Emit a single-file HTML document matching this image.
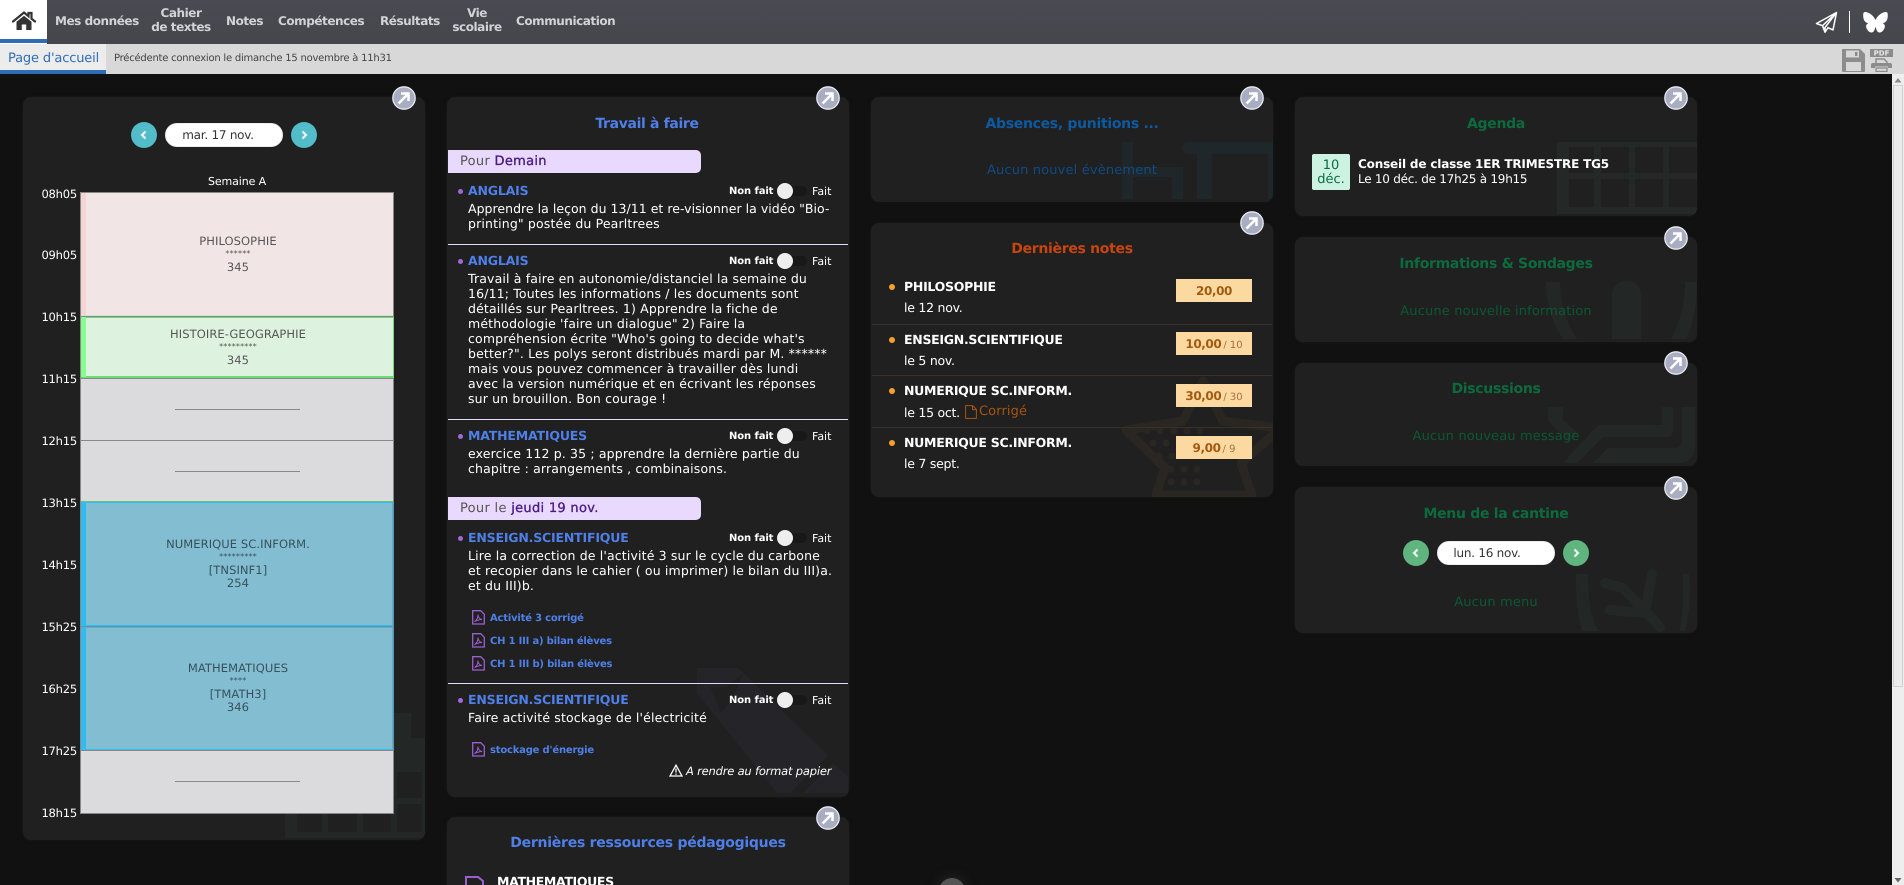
<!DOCTYPE html>
<html lang="fr"><head><meta charset="utf-8"><title>Page d'accueil</title>
<style>
html,body{margin:0;padding:0;width:1904px;height:885px;overflow:hidden;background:#111}
body{position:relative;font-family:"DejaVu Sans","Liberation Sans",sans-serif;font-size:12px;color:#fff;text-rendering:geometricPrecision}
.a{position:absolute}
.t{position:absolute;white-space:nowrap;line-height:16px;height:16px}
.c{text-align:center}
.b{font-weight:bold}
.nav{color:#d2d3d6;font-size:12px;font-weight:bold;letter-spacing:-.45px}
.panel{position:absolute;background:#202020;border-radius:8px;box-shadow:0 0 3px #1a1a1a;overflow:hidden}
.h{font-size:11.5px;color:#fff;text-align:right;left:30px;width:47px;letter-spacing:-.2px;margin-top:.5px}
.cl{color:#555;font-size:11.5px;left:86px;width:304px;text-align:center;letter-spacing:.08px}
.cd{color:#37505c}
.st{font-size:8px;letter-spacing:.2px;margin-top:1px}
.ln{position:absolute;left:175px;width:125px;height:1px;background:#888}
.ti{font-size:12.5px;font-weight:bold;color:#4f7fe8;left:468px;letter-spacing:-.18px}
.tx{font-size:12.5px;color:#fff;left:468px;letter-spacing:.15px}
.bul{position:absolute;width:5px;height:5px;border-radius:50%;background:#a368d8;left:458px}
.nf{font-size:10px;font-weight:bold;color:#fff;left:729px;letter-spacing:-.1px;margin-top:1px}
.f{font-size:11px;color:#fff;left:812px;letter-spacing:0;margin-top:1px}
.trk{position:absolute;left:785px;width:22px;height:10px;background:#181818;border-radius:5px}
.knb{position:absolute;left:777px;width:16px;height:16px;background:#eee;border-radius:50%}
.bar{position:absolute;left:448px;width:253px;height:23px;background:#e9d9fe;border-radius:0 5px 5px 0}
.bt{left:460px;font-size:13px;color:#555;letter-spacing:.3px}
.bt b{color:#4a1c85;font-weight:normal;-webkit-text-stroke:.35px #4a1c85}
.sep{position:absolute;left:448px;width:400px;height:1px;background:#e9d9fe}
.lk{font-size:10px;font-weight:bold;color:#4f7fe8;left:490px;letter-spacing:-.2px;margin-top:1px}
.pt{font-size:14px;font-weight:bold;text-align:center;width:402px;letter-spacing:-.3px;margin-top:1px}
.pe{font-size:13px;text-align:center;width:402px;letter-spacing:.15px;margin-top:1px}
.gr{color:#0c6b3e}.g2{color:#0a5934}
.nt{font-size:12.5px;font-weight:bold;color:#fff;left:904px;letter-spacing:-.28px}
.ns{font-size:12.5px;color:#fff;left:904px;letter-spacing:-.25px;margin-top:1px}
.nb{position:absolute;left:1176px;width:76px;height:23px;background:#fdd9a2;color:#a05a10;text-align:center;line-height:24px;font-weight:bold;font-size:12px;letter-spacing:-.4px;white-space:nowrap}
.nb small{font-weight:normal;font-size:10px;color:#a8703a;letter-spacing:0;margin-left:2px}
.dot{position:absolute;width:6px;height:6px;border-radius:50%;background:#f9a226;left:889px}
.nsep{position:absolute;left:872px;width:400px;height:1px;background:#3a3026}
.circ{position:absolute;width:24px;height:24px}
.pill{position:absolute;width:118px;height:24px;background:#fff;border-radius:12px;color:#333;font-size:12px;line-height:24px;text-align:center;letter-spacing:-.25px;box-shadow:inset 0 0 1px #888}
</style></head><body>

<!-- nav -->
<div class="a" style="left:0;top:0;width:1904px;height:44px;background:linear-gradient(#4a4b52,#45464c)"></div>
<div class="a" style="left:0;top:0;width:47px;height:44px;background:#fff"></div>
<div class="a" style="left:0;top:39px;width:47px;height:4px;background:#2e6db4"></div>
<svg class="a" style="left:12px;top:11px" width="24" height="20" viewBox="0 0 24 20"><path d="M1 10.5 12 1.5l4.5 3.7V2h3v5.700l3.500 2.800" fill="none" stroke="#333" stroke-width="2.200" stroke-linecap="round"/><path d="M4.500 10.800 12 4.800l7.500 6V19h-5.300v-5.500h-4.400V19H4.500z" fill="#333"/></svg>
<div class="t nav" style="left:55px;top:13px">Mes données</div>
<div class="t nav c" style="left:151px;width:60px;top:5px">Cahier</div>
<div class="t nav c" style="left:146px;width:70px;top:19px">de textes</div>
<div class="t nav" style="left:226px;top:13px">Notes</div>
<div class="t nav" style="left:278px;top:13px">Compétences</div>
<div class="t nav" style="left:380px;top:13px">Résultats</div>
<div class="t nav c" style="left:447px;width:60px;top:5px">Vie</div>
<div class="t nav c" style="left:447px;width:60px;top:19px">scolaire</div>
<div class="t nav" style="left:516px;top:13px">Communication</div>
<svg class="a" style="left:1815px;top:11px" width="23" height="23" viewBox="0 0 23 23"><path d="M21.500 1.500 1.500 12.500l6 2.200 2.500 6.500 3-4.500 5 2.200zM7.500 14.700 21.500 1.500 10 16.500l0 4.700" fill="none" stroke="#fff" stroke-width="1.500" stroke-linejoin="round"/></svg>
<div class="a" style="left:1849px;top:11px;width:1px;height:22px;background:#fff"></div>
<svg class="a" style="left:1863px;top:11px" width="25" height="23" viewBox="0 0 25 23"><path d="M12.500 9C10.500 4.500 6 1 2 1 .3 1 0 3 .3 6c.3 3 1.500 5.500 5 6.200C2.500 13.500 2.500 16 4.500 19c2 3 5.500 3.500 6.700.5.500-1.200 1-2.500 1.300-4 .3 1.500.8 2.800 1.300 4 1.200 3 4.700 2.500 6.700-.5 2-3 2-5.500-.8-6.800 3.500-.7 4.700-3.200 5-6.200C25 3 24.700 1 23 1c-4 0-8.500 3.500-10.500 8z" fill="#fff"/></svg>

<!-- sub bar -->
<div class="a" style="left:0;top:44px;width:1904px;height:30px;background:#d8d8d8"></div>
<div class="a" style="left:0;top:44px;width:106px;height:26px;background:#ececec"></div>
<div class="a" style="left:0;top:70px;width:106px;height:4px;background:#2e6db4"></div>
<div class="t" style="left:8px;top:51px;font-size:13px;color:#2f6cb5;letter-spacing:-.15px">Page d'accueil</div>
<div class="t" style="left:114px;top:51px;font-size:10px;color:#444;letter-spacing:-.23px">Précédente connexion le dimanche 15 novembre à 11h31</div>
<svg class="a" style="left:1842px;top:49px" width="23" height="23" viewBox="0 0 23 23"><path d="M1 0h17l5 5v17a1 1 0 0 1-1 1H1a1 1 0 0 1-1-1V1a1 1 0 0 1 1-1z" fill="#8c8c8c"/><rect x="4" y="1.500" width="13" height="7" fill="#d8d8d8"/><rect x="13" y="3" width="2.500" height="4" fill="#8c8c8c"/><rect x="4" y="13" width="15" height="9" fill="#d8d8d8"/></svg>
<svg class="a" style="left:1870px;top:49px" width="23" height="23" viewBox="0 0 23 23"><rect width="23" height="8" fill="#8c8c8c"/><text x="11.500" y="6.700" font-size="7" font-weight="bold" text-anchor="middle" fill="#e8e8e8" font-family="DejaVu Sans">PDF</text><path d="M6 10h8l3 3v2H6z" fill="none" stroke="#8c8c8c" stroke-width="1.500"/><path d="M3 14h17a2 2 0 0 1 2 2v3h-4v-1.500H5V19H1v-3a2 2 0 0 1 2-2z" fill="#8c8c8c"/><rect x="6" y="19" width="11" height="3.500" fill="none" stroke="#8c8c8c" stroke-width="1.300"/></svg>

<!-- scrollbar -->
<div class="a" style="left:1892px;top:74px;width:12px;height:811px;background:#eee"></div>
<svg class="a" style="left:1892px;top:74px" width="12" height="12"><path d="M2.500 8.500h7L6 4z" fill="#8a8a8a"/></svg>
<svg class="a" style="left:1892px;top:874px" width="12" height="11"><path d="M2.500 4h7L6 8.500z" fill="#666"/></svg>
<div class="a" style="left:1893px;top:85px;width:8px;height:600px;background:#ebebeb;border:1px solid #d0d0d0"></div>

<!-- panels -->
<div class="panel" style="left:23px;top:97px;width:402px;height:743px">
<svg class="a" style="left:0;top:0" width="402" height="743"><path d="M262 741V641h109v-25h17v25h14v100z" fill="#232827"/><g fill="#202020"><rect x="274" y="675" width="25" height="26"/><rect x="305" y="675" width="29" height="26"/><rect x="340" y="675" width="28" height="26"/><rect x="374" y="675" width="25" height="26"/><rect x="274" y="707" width="25" height="28"/><rect x="305" y="707" width="29" height="28"/><rect x="340" y="707" width="28" height="28"/><rect x="374" y="707" width="25" height="28"/></g></svg>
</div>
<div class="panel" style="left:447px;top:97px;width:402px;height:700px">
<svg class="a" style="left:0;top:0" width="402" height="700"><path d="M250 571h41l90 87-38 38h-13l-80-100z" fill="#252429"/><path d="M386 666l15 14v16h-45z" fill="#252429"/><path d="M263 590h16l17-14-10 26-12 14z" fill="#202020"/></svg>
</div>
<div class="panel" style="left:447px;top:817px;width:402px;height:100px"></div>
<div class="panel" style="left:871px;top:97px;width:402px;height:105px">
<svg class="a" style="left:0;top:0" width="402" height="105"><g fill="#1f272b"><rect x="251" y="45" width="11" height="57"/><path d="M262 70h50v32h-11V80h-39z"/><path d="M317 45h85v12h-61v45h-15V57h-9a6 6 0 0 1 0-12z"/><rect x="397" y="57" width="5" height="45"/></g></svg>
</div>
<div class="panel" style="left:871px;top:223px;width:402px;height:274px">
<svg class="a" style="left:0;top:0" width="402" height="274"><path d="M332 158l20 40 58 7-40 35 11 32h-96l9-27-39-38 57-9z" fill="none" stroke="#2a2622" stroke-width="9" stroke-linejoin="round"/><g fill="#2a2622"><circle cx="263" cy="208" r="3.500"/><circle cx="276" cy="208" r="3.500"/><circle cx="289" cy="208" r="3.500"/><circle cx="303" cy="208" r="3.500"/><circle cx="316" cy="208" r="3.500"/><circle cx="329" cy="208" r="3.500"/><circle cx="282" cy="220" r="3.500"/><circle cx="295" cy="220" r="3.500"/><circle cx="308" cy="220" r="3.500"/><circle cx="321" cy="220" r="3.500"/><circle cx="288" cy="233" r="3.500"/><circle cx="301" cy="233" r="3.500"/><circle cx="314" cy="233" r="3.500"/><circle cx="327" cy="233" r="3.500"/><circle cx="300" cy="246" r="3.500"/><circle cx="313" cy="246" r="3.500"/><circle cx="326" cy="246" r="3.500"/><circle cx="300" cy="259" r="3.500"/><circle cx="313" cy="259" r="3.500"/><circle cx="326" cy="259" r="3.500"/></g></svg>
</div>
<div class="panel" style="left:1295px;top:97px;width:402px;height:119px">
<svg class="a" style="left:0;top:0" width="402" height="119"><rect x="262" y="45" width="140" height="72" fill="#242928"/><g fill="#202020"><rect x="274" y="50" width="25" height="26"/><rect x="306" y="50" width="28" height="26"/><rect x="340" y="50" width="28" height="26"/><rect x="374" y="50" width="28" height="26"/><rect x="274" y="82" width="25" height="28"/><rect x="306" y="82" width="28" height="28"/><rect x="340" y="82" width="28" height="28"/><rect x="374" y="82" width="28" height="28"/></g></svg>
</div>
<div class="panel" style="left:1295px;top:237px;width:402px;height:105px">
<svg class="a" style="left:0;top:0" width="402" height="105"><g fill="#232827"><path d="M251 45h14c0 22 6 40 17 57h-14c-11-17-17-35-17-57z"/><path d="M390 45c0 22-5 40-14 57h15c7-14 11-36 11-57z"/><path d="M317 102V58a14.500 14.500 0 0 1 29 0v44z"/></g></svg>
</div>
<div class="panel" style="left:1295px;top:363px;width:402px;height:103px">
<svg class="a" style="left:0;top:0" width="402" height="103"><g fill="#232827"><path d="M367 44h11v24a6 6 0 0 1-6 6H308l-26 26h-14l35-38h64z"/><path d="M387 44h13v40a16 16 0 0 1-16 16H298l15-15h67a7 7 0 0 0 7-7z"/><path d="M253 44h15v13l14 13-8 8-21-20z"/></g></svg>
</div>
<div class="panel" style="left:1295px;top:487px;width:402px;height:146px">
<svg class="a" style="left:0;top:0" width="402" height="146"><g fill="#232827"><path d="M281 87h12c0 22 2 40 10 57h-16c-5-18-6-36-6-57z"/><path d="M388 87h6c2 22 0 40-4 57h-5c3-18 3-36 3-57z"/></g><g fill="none" stroke="#232827" stroke-width="10" stroke-linecap="round"><path d="M310 96l18 5 37 39"/><path d="M315 123l37 3"/><path d="M357 87l-7 39"/></g></svg>
</div>

<!-- arrow circles -->
<svg width="0" height="0" style="position:absolute"><defs><g id="ar"><circle cx="12" cy="12" r="11.200" fill="#a9adc1" stroke="#e8e8ee" stroke-width="1.300"/><path d="M6.500 17.500 16 8M9 7.500h7.500V15" fill="none" stroke="#fff" stroke-width="2.500"/></g></defs></svg>
<svg class="circ" style="left:392px;top:86px"><use href="#ar"/></svg>
<svg class="circ" style="left:816px;top:86px"><use href="#ar"/></svg>
<svg class="circ" style="left:816px;top:806px"><use href="#ar"/></svg>
<svg class="circ" style="left:1240px;top:86px"><use href="#ar"/></svg>
<svg class="circ" style="left:1240px;top:211px"><use href="#ar"/></svg>
<svg class="circ" style="left:1664px;top:86px"><use href="#ar"/></svg>
<svg class="circ" style="left:1664px;top:226px"><use href="#ar"/></svg>
<svg class="circ" style="left:1664px;top:351px"><use href="#ar"/></svg>
<svg class="circ" style="left:1664px;top:476px"><use href="#ar"/></svg>

<!-- col 1 -->
<svg class="a" style="left:131px;top:122px" width="26" height="26"><circle cx="13" cy="13" r="13" fill="#52bcc9"/><path d="M14.500 9.500 11 13l3.500 3.500" fill="none" stroke="#fff" stroke-width="2"/></svg>
<div class="pill" style="left:165px;top:123px;text-indent:-12px">mar. 17 nov.</div>
<svg class="a" style="left:291px;top:122px" width="26" height="26"><circle cx="13" cy="13" r="13" fill="#52bcc9"/><path d="M11.500 9.500 15 13l-3.500 3.500" fill="none" stroke="#fff" stroke-width="2"/></svg>
<div class="t c" style="left:187px;width:100px;top:174px;font-size:11px;letter-spacing:-.1px">Semaine A</div>

<div class="a" style="left:80px;top:192px;width:312px;height:620px;border:1px solid #888;background:#dbdbdd"></div>
<div class="a" style="left:81px;top:193px;width:312px;height:122px;background:#f1e6e5"></div>
<div class="a" style="left:81px;top:193px;width:5px;height:122px;background:#f5d5d3"></div>
<div class="a" style="left:80px;top:316px;width:314px;height:1px;background:#888"></div>
<div class="a" style="left:81px;top:317px;width:311px;height:58px;background:#def3df;border:1px solid #6cdc74;border-bottom-width:2px"></div>
<div class="a" style="left:81px;top:317px;width:5px;height:60px;background:#85ff8e"></div>
<div class="a" style="left:80px;top:378px;width:314px;height:1px;background:#888"></div>
<div class="a" style="left:80px;top:440px;width:314px;height:1px;background:#888"></div>
<div class="a" style="left:81px;top:501px;width:312px;height:1px;background:#6cc47a"></div>
<div class="a" style="left:81px;top:502px;width:310px;height:122px;background:#83bdd1;border:1px solid #2ebcf2"></div>
<div class="a" style="left:81px;top:502px;width:5px;height:124px;background:#2ebcf2"></div>
<div class="a" style="left:80px;top:626px;width:314px;height:1px;background:#888"></div>
<div class="a" style="left:81px;top:627px;width:310px;height:121px;background:#83bdd1;border:1px solid #2ebcf2"></div>
<div class="a" style="left:81px;top:627px;width:5px;height:123px;background:#2ebcf2"></div>
<div class="a" style="left:80px;top:750px;width:314px;height:1px;background:#888"></div>
<div class="ln" style="top:409px"></div><div class="ln" style="top:471px"></div><div class="ln" style="top:781px"></div>

<div class="t h" style="top:185px">08h05</div><div class="t h" style="top:246px">09h05</div><div class="t h" style="top:308px">10h15</div><div class="t h" style="top:370px">11h15</div><div class="t h" style="top:432px">12h15</div><div class="t h" style="top:494px">13h15</div><div class="t h" style="top:556px">14h15</div><div class="t h" style="top:618px">15h25</div><div class="t h" style="top:680px">16h25</div><div class="t h" style="top:742px">17h25</div><div class="t h" style="top:804px">18h15</div>

<div class="t cl" style="top:233px">PHILOSOPHIE</div><div class="t cl st" style="top:245px">******</div><div class="t cl" style="top:259px">345</div>
<div class="t cl" style="top:326px">HISTOIRE-GEOGRAPHIE</div><div class="t cl st" style="top:338px">*********</div><div class="t cl" style="top:352px">345</div>
<div class="t cl cd" style="top:536px">NUMERIQUE SC.INFORM.</div><div class="t cl cd st" style="top:548px">*********</div><div class="t cl cd" style="top:562px">[TNSINF1]</div><div class="t cl cd" style="top:575px">254</div>
<div class="t cl cd" style="top:660px">MATHEMATIQUES</div><div class="t cl cd st" style="top:672px">****</div><div class="t cl cd" style="top:686px">[TMATH3]</div><div class="t cl cd" style="top:699px">346</div>

<!-- col 2 -->
<div class="t c b" style="left:447px;width:400px;top:116px;font-size:14px;color:#4f7fe8;letter-spacing:-.35px">Travail à faire</div>
<div class="bar" style="top:150px"></div><div class="t bt" style="top:154px">Pour <b>Demain</b></div>

<div class="bul" style="top:189px"></div><div class="t ti" style="top:183px">ANGLAIS</div>
<div class="t nf" style="top:183px">Non fait</div><div class="trk" style="top:186px"></div><div class="knb" style="top:183px"></div><div class="t f" style="top:183px">Fait</div>
<div class="t tx" style="top:201px;letter-spacing:.03px">Apprendre la leçon du 13/11 et re-visionner la vidéo "Bio-</div>
<div class="t tx" style="top:216px">printing" postée du Pearltrees</div>
<div class="sep" style="top:244px"></div>

<div class="bul" style="top:259px"></div><div class="t ti" style="top:253px">ANGLAIS</div>
<div class="t nf" style="top:253px">Non fait</div><div class="trk" style="top:256px"></div><div class="knb" style="top:253px"></div><div class="t f" style="top:253px">Fait</div>
<div class="t tx" style="top:271px">Travail à faire en autonomie/distanciel la semaine du</div>
<div class="t tx" style="top:286px">16/11; Toutes les informations / les documents sont</div>
<div class="t tx" style="top:301px">détaillés sur Pearltrees. 1) Apprendre la fiche de</div>
<div class="t tx" style="top:316px">méthodologie 'faire un dialogue" 2) Faire la</div>
<div class="t tx" style="top:331px">compréhension écrite "Who's going to decide what's</div>
<div class="t tx" style="top:346px">better?". Les polys seront distribués mardi par M. ******</div>
<div class="t tx" style="top:361px">mais vous pouvez commencer à travailler dès lundi</div>
<div class="t tx" style="top:376px">avec la version numérique et en écrivant les réponses</div>
<div class="t tx" style="top:391px">sur un brouillon. Bon courage !</div>
<div class="sep" style="top:419px"></div>

<div class="bul" style="top:434px"></div><div class="t ti" style="top:428px">MATHEMATIQUES</div>
<div class="t nf" style="top:428px">Non fait</div><div class="trk" style="top:431px"></div><div class="knb" style="top:428px"></div><div class="t f" style="top:428px">Fait</div>
<div class="t tx" style="top:446px">exercice 112 p. 35 ; apprendre la dernière partie du</div>
<div class="t tx" style="top:461px">chapitre : arrangements , combinaisons.</div>

<div class="bar" style="top:497px"></div><div class="t bt" style="top:501px">Pour le <b>jeudi 19 nov.</b></div>

<div class="bul" style="top:536px"></div><div class="t ti" style="top:530px">ENSEIGN.SCIENTIFIQUE</div>
<div class="t nf" style="top:530px">Non fait</div><div class="trk" style="top:533px"></div><div class="knb" style="top:530px"></div><div class="t f" style="top:530px">Fait</div>
<div class="t tx" style="top:548px">Lire la correction de l'activité 3 sur le cycle du carbone</div>
<div class="t tx" style="top:563px">et recopier dans le cahier ( ou imprimer) le bilan du III)a.</div>
<div class="t tx" style="top:578px">et du III)b.</div>

<svg width="0" height="0" style="position:absolute"><defs><g id="pdf"><path d="M.7.7h8l3.600 3.600v9.700H.7z" fill="none" stroke="#9b5fd0" stroke-width="1.300"/><path d="M2.500 11.500c2.500-1.500 3.500-4 3.500-7 0 3 1.500 4.500 4 5-2.500 0-5 .8-7.500 2z" fill="none" stroke="#9b5fd0"/></g></defs></svg>
<svg class="a" style="left:472px;top:610px" width="13" height="15"><use href="#pdf"/></svg><div class="t lk" style="top:610px">Activité 3 corrigé</div>
<svg class="a" style="left:472px;top:633px" width="13" height="15"><use href="#pdf"/></svg><div class="t lk" style="top:633px">CH 1 III a) bilan élèves</div>
<svg class="a" style="left:472px;top:656px" width="13" height="15"><use href="#pdf"/></svg><div class="t lk" style="top:656px">CH 1 III b) bilan élèves</div>
<div class="sep" style="top:683px"></div>

<div class="bul" style="top:698px"></div><div class="t ti" style="top:692px">ENSEIGN.SCIENTIFIQUE</div>
<div class="t nf" style="top:692px">Non fait</div><div class="trk" style="top:695px"></div><div class="knb" style="top:692px"></div><div class="t f" style="top:692px">Fait</div>
<div class="t tx" style="top:710px">Faire activité stockage de l'électricité</div>
<svg class="a" style="left:472px;top:742px" width="13" height="15"><use href="#pdf"/></svg><div class="t lk" style="top:742px">stockage d'énergie</div>
<svg class="a" style="left:669px;top:764px" width="14" height="13"><path d="M7 1.200 13 12H1z" fill="none" stroke="#fff" stroke-width="1.300"/><path d="M7 4.500v4M7 9.500v1.300" stroke="#fff" stroke-width="1.300"/></svg>
<div class="t" style="left:686px;top:763px;font-size:11.500px;font-style:italic;letter-spacing:-.2px">A rendre au format papier</div>

<div class="t c b" style="left:447px;width:402px;top:835px;font-size:14px;color:#4f7fe8;letter-spacing:-.25px">Dernières ressources pédagogiques</div>
<svg class="a" style="left:465px;top:876px" width="19" height="12"><path d="M1 12V1h12l5 4v7" fill="none" stroke="#9b5fd0" stroke-width="2"/></svg>
<div class="t b" style="left:497px;top:874px;font-size:12.500px;letter-spacing:-.35px">MATHEMATIQUES</div>

<!-- col 3 -->
<div class="t pt" style="left:871px;top:115px;color:#0e5aa0">Absences, punitions ...</div>
<div class="t pe" style="left:871px;top:162px;color:#0f4b86">Aucun nouvel évènement</div>
<div class="t pt" style="left:871px;top:240px;color:#c8450e">Dernières notes</div>

<div class="dot" style="top:284px"></div><div class="t nt" style="top:279px">PHILOSOPHIE</div><div class="t ns" style="top:299px">le 12 nov.</div><div class="nb" style="top:279px">20,00</div>
<div class="nsep" style="top:324px"></div>
<div class="dot" style="top:337px"></div><div class="t nt" style="top:332px">ENSEIGN.SCIENTIFIQUE</div><div class="t ns" style="top:352px">le 5 nov.</div><div class="nb" style="top:332px">10,00<small>/ 10</small></div>
<div class="nsep" style="top:375px"></div>
<div class="dot" style="top:388px"></div><div class="t nt" style="top:383px">NUMERIQUE SC.INFORM.</div><div class="t ns" style="top:404px">le 15 oct.</div>
<svg class="a" style="left:965px;top:405px" width="12" height="14"><path d="M.6.6h7l3.800 3.800v9H.6zM7.500.6v4h3.900" fill="none" stroke="#a85510" stroke-width="1"/></svg>
<div class="t" style="left:979px;top:404px;font-size:13px;color:#a85510;letter-spacing:.1px">Corrigé</div>
<div class="nb" style="top:384px">30,00<small>/ 30</small></div>
<div class="nsep" style="top:427px"></div>
<div class="dot" style="top:440px"></div><div class="t nt" style="top:435px">NUMERIQUE SC.INFORM.</div><div class="t ns" style="top:455px">le 7 sept.</div><div class="nb" style="top:436px">9,00<small>/ 9</small></div>

<!-- col 4 -->
<div class="t pt gr" style="left:1295px;top:115px">Agenda</div>
<div class="a" style="left:1312px;top:154px;width:38px;height:36px;background:#ccf2e2;border-radius:2px"></div>
<div class="t c" style="left:1312px;width:38px;top:158px;font-size:13px;color:#0b6a40;letter-spacing:0">10</div>
<div class="t c" style="left:1312px;width:38px;top:172px;font-size:13px;color:#0b6a40;letter-spacing:0">déc.</div>
<div class="t b" style="left:1358px;top:156px;font-size:12px;letter-spacing:-.17px">Conseil de classe 1ER TRIMESTRE TG5</div>
<div class="t" style="left:1358px;top:171px;font-size:12px;letter-spacing:-.25px">Le 10 déc. de 17h25 à 19h15</div>

<div class="t pt gr" style="left:1295px;top:255px">Informations &amp; Sondages</div>
<div class="t pe g2" style="left:1295px;top:303px">Aucune nouvelle information</div>
<div class="t pt gr" style="left:1295px;top:380px">Discussions</div>
<div class="t pe g2" style="left:1295px;top:428px">Aucun nouveau message</div>
<div class="t pt gr" style="left:1295px;top:505px">Menu de la cantine</div>
<svg class="a" style="left:1403px;top:540px" width="26" height="26"><circle cx="13" cy="13" r="13" fill="#60b57f"/><path d="M14.500 9.500 11 13l3.500 3.500" fill="none" stroke="#fff" stroke-width="2"/></svg>
<div class="pill" style="left:1437px;top:541px;text-indent:-18px">lun. 16 nov.</div>
<svg class="a" style="left:1563px;top:540px" width="26" height="26"><circle cx="13" cy="13" r="13" fill="#60b57f"/><path d="M11.500 9.500 15 13l-3.500 3.500" fill="none" stroke="#fff" stroke-width="2"/></svg>
<div class="t pe g2" style="left:1295px;top:594px">Aucun menu</div>

<!-- bottom floating button -->
<div class="a" style="left:939px;top:878px;width:26px;height:26px;border-radius:50%;background:#555;box-shadow:0 0 14px rgba(120,120,120,.25)"></div>
</body></html>
